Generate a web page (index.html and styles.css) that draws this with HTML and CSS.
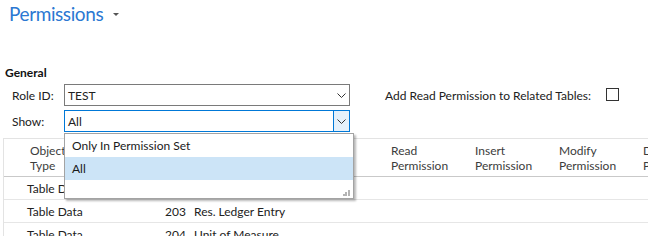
FILE: index.html
```html
<!DOCTYPE html>
<html>
<head>
<meta charset="utf-8">
<title>Permissions</title>
<link rel="stylesheet" href="styles.css">
</head>
<body>
<div class="page">
  <header class="title-bar">
    <h1 class="title">Permissions</h1>
    <span class="title-caret"></span>
  </header>

  <section class="general">
    <h2 class="section-title">General</h2>
    <div class="form">
      <label class="field-label">Role ID:</label>
      <div class="select">
        <span class="select-value">TEST</span>
        <span class="select-btn">
          <svg class="chevron" width="9" height="5" viewBox="0 0 9 5"><polyline points="0.5,0.5 4.5,4.5 8.5,0.5" fill="none" stroke="#333" stroke-width="1"/></svg>
        </span>
      </div>
      <div class="check-field">
        <span class="check-label">Add Read Permission to Related Tables:</span>
        <span class="checkbox"></span>
      </div>

      <label class="field-label">Show:</label>
      <div class="select select--focus">
        <span class="select-value">All</span>
        <span class="select-btn">
          <svg class="chevron" width="9" height="5" viewBox="0 0 9 5"><polyline points="0.5,0.5 4.5,4.5 8.5,0.5" fill="none" stroke="#333" stroke-width="1"/></svg>
        </span>
        <div class="dropdown">
          <div class="dropdown-item">Only In Permission Set</div>
          <div class="dropdown-item dropdown-item--selected">All</div>
          <div class="dropdown-footer">
            <svg class="grip" width="7" height="7" viewBox="0 0 7 7">
              <rect x="5" y="1" width="2" height="2" fill="#b4b4b4"/>
              <rect x="2" y="3" width="2" height="2" fill="#b4b4b4"/>
              <rect x="5" y="3" width="2" height="2" fill="#b4b4b4"/>
              <rect x="0" y="5" width="2" height="2" fill="#b4b4b4"/>
              <rect x="2" y="5" width="2" height="2" fill="#b4b4b4"/>
              <rect x="5" y="5" width="2" height="2" fill="#b4b4b4"/>
            </svg>
          </div>
        </div>
      </div>
    </div>
  </section>

  <div class="grid">
    <div class="grid-row grid-head">
      <div class="cell"></div>
      <div class="cell cell-type">Object<br>Type</div>
      <div class="cell cell-num"></div>
      <div class="cell cell-name"></div>
      <div class="cell">Read<br>Permission</div>
      <div class="cell">Insert<br>Permission</div>
      <div class="cell">Modify<br>Permission</div>
      <div class="cell cell-last">Delete<br>Permission</div>
    </div>
    <div class="grid-row">
      <div class="cell"></div>
      <div class="cell cell-type">Table Data</div>
      <div class="cell cell-num">202</div>
      <div class="cell cell-name">Resource Cost</div>
      <div class="cell"></div>
      <div class="cell"></div>
      <div class="cell"></div>
      <div class="cell"></div>
    </div>
    <div class="grid-row">
      <div class="cell"></div>
      <div class="cell cell-type">Table Data</div>
      <div class="cell cell-num">203</div>
      <div class="cell cell-name">Res. Ledger Entry</div>
      <div class="cell"></div>
      <div class="cell"></div>
      <div class="cell"></div>
      <div class="cell"></div>
    </div>
    <div class="grid-row">
      <div class="cell"></div>
      <div class="cell cell-type">Table Data</div>
      <div class="cell cell-num">204</div>
      <div class="cell cell-name">Unit of Measure</div>
      <div class="cell"></div>
      <div class="cell"></div>
      <div class="cell"></div>
      <div class="cell"></div>
    </div>
  </div>
</div>
</body>
</html>
```

FILE: styles.css
```css
html, body {
  margin: 0;
  padding: 0;
}

body {
  width: 648px;
  height: 236px;
  overflow: hidden;
  background: #ffffff;
  font-family: Lato, "Noto Sans", sans-serif;
  font-size: 12px;
  color: #212121;
}

.page {
  position: relative;
  width: 648px;
  overflow: hidden;
}

/* Title */
.title-bar {
  display: flex;
  align-items: center;
  height: 24px;
  padding: 2px 0 0 9px;
}

.title {
  margin: 0;
  font-size: 19px;
  letter-spacing: -0.4px;
  font-weight: 400;
  line-height: 24px;
  color: #2b78d2;
}

.title-caret {
  margin-left: 10px;
  width: 0;
  height: 0;
  border-left: 3px solid transparent;
  border-right: 3px solid transparent;
  border-top: 3px solid #555555;
}

/* General section */
.general {
  margin-top: 39px;
}

.section-title {
  margin: 0 0 0 5px;
  font-size: 12px;
  font-weight: 700;
  line-height: 15px;
  color: #111111;
}

.form {
  display: grid;
  grid-template-columns: 52px 286px auto;
  grid-template-rows: 22px 22px;
  row-gap: 4px;
  align-items: center;
  padding-left: 12px;
  margin-top: 4px;
}

.field-label {
  line-height: 15px;
}

.select {
  position: relative;
  display: flex;
  align-items: center;
  height: 22px;
  box-sizing: border-box;
  border: 1px solid #7a7a7a;
  background: #ffffff;
}

.select-value {
  flex: 1;
  padding-left: 3px;
  line-height: 15px;
}

.select-btn {
  display: flex;
  align-items: center;
  justify-content: center;
  width: 16px;
  height: 100%;
  box-sizing: border-box;
}

.select--focus {
  border-color: #0078d7;
}

.select--focus .select-btn {
  background: #e5f1fb;
  border-left: 1px solid #0078d7;
}

.check-field {
  display: grid;
  grid-template-columns: 221px 13px;
  align-items: center;
  margin-left: 35px;
}

.checkbox {
  width: 13px;
  height: 13px;
  box-sizing: border-box;
  border: 1px solid #333333;
  margin-top: -1px;
}

/* Dropdown list */
.dropdown {
  position: absolute;
  top: 22px;
  left: -1px;
  width: 290px;
  box-sizing: border-box;
  border: 1px solid #a3a3a3;
  background: #ffffff;
  box-shadow: 2px 2px 2px rgba(0, 0, 0, 0.28);
  z-index: 10;
}

.dropdown-item {
  height: 23px;
  line-height: 23px;
  padding-left: 7px;
  color: #1a1a1a;
}

.dropdown-item--selected {
  background: #cce4f7;
}

.dropdown-footer {
  display: flex;
  justify-content: flex-end;
  align-items: flex-end;
  height: 18px;
  padding: 0 3px 2px 0;
  box-sizing: border-box;
}

/* Grid */
.grid {
  margin-top: 6px;
  margin-left: 3px;
  border-left: 1px solid #e3e3e3;
  border-top: 1px solid #e3e3e3;
}

.grid-row {
  display: grid;
  grid-template-columns: 23px 130px 29px 205px 84px 84px 84px 84px;
  height: 22px;
  align-items: center;
  border-bottom: 1px solid #e6e6e6;
  white-space: nowrap;
}

.grid-head {
  align-items: start;
  padding-top: 4px;
  box-sizing: border-box;
  height: 38px;
  border-bottom: 1px solid #c9c9c9;
  color: #3c3c3c;
  line-height: 15px;
}

.grid-head .cell-type {
  padding-left: 3px;
}

.cell-num {
  text-align: right;
}

.cell-name {
  padding-left: 8px;
}
```
